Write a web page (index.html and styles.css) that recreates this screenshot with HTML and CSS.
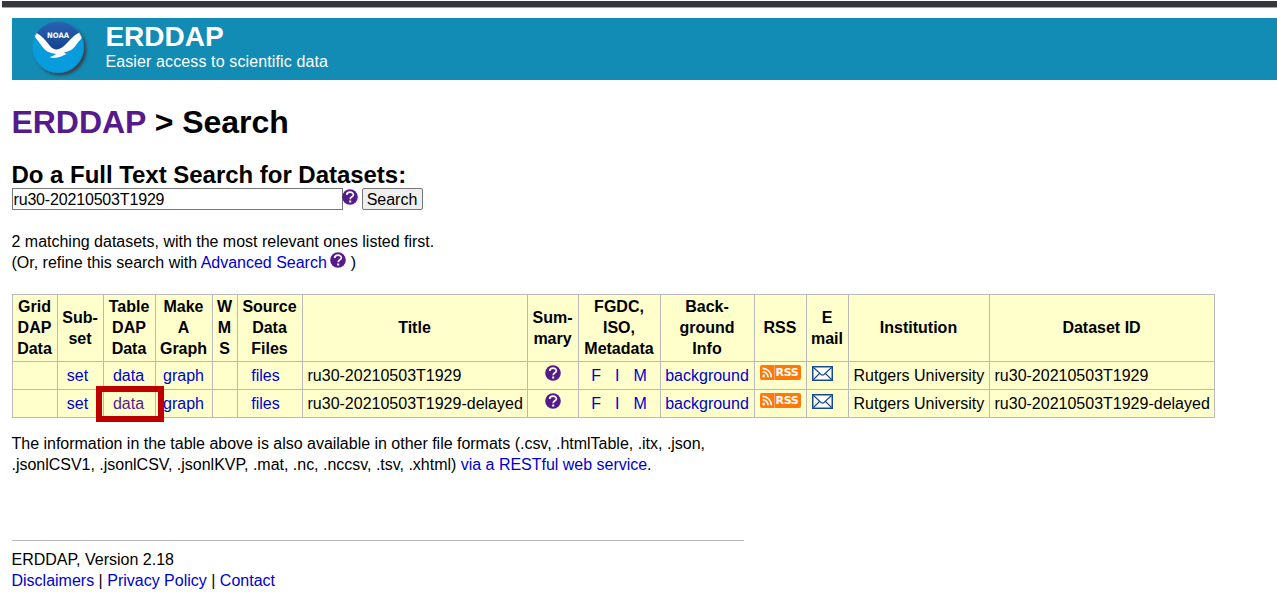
FILE: index.html
```
<!DOCTYPE html>
<html lang="en">
<head>
<meta charset="utf-8">
<title>ERDDAP - Search</title>
<link rel="stylesheet" href="styles.css">
</head>
<body>
<svg class="sprite" width="0" height="0" aria-hidden="true">
  <defs>
    <symbol id="help" viewBox="0 0 16 16">
      <circle cx="8" cy="8" r="7.8" fill="#551a8b"/>
      <path d="M4.7 6C4.7 2.3 11.4 2.3 11.4 5.8C11.4 8 8.2 7.7 8.2 10.2" fill="none" stroke="#fff" stroke-width="1.7"/>
      <rect x="7.2" y="11.5" width="2" height="2" fill="#fff"/>
    </symbol>
    <symbol id="feed" viewBox="0 0 14 15">
      <circle cx="3.7" cy="11" r="1.4" fill="#fff"/>
      <path d="M2.5 6.7A5.4 5.4 0 0 1 8 12.3M2.5 3.4A8.8 8.8 0 0 1 11.3 12.3" fill="none" stroke="#fff" stroke-width="1.6"/>
    </symbol>
    <symbol id="mail" viewBox="0 0 21 15">
      <rect x=".75" y=".75" width="19.5" height="13.5" fill="#fff" stroke="#174a8c" stroke-width="1.5"/>
      <path d="M1.5 1.5L9 8.5Q10.5 9.7 12 8.5L19.5 1.5M1.5 13.5L7.5 7.5M19.5 13.5L13.5 7.5" fill="none" stroke="#174a8c" stroke-width="1.1"/>
    </symbol>
  </defs>
</svg>
<div class="topbar"></div>
<header class="banner">
  <svg class="logo" viewBox="0 0 64 60">
    <defs>
      <linearGradient id="navy" x1="0" y1="0" x2="0" y2="1"><stop offset="0" stop-color="#2c67b5"/><stop offset="1" stop-color="#103f8f"/></linearGradient>
      <clipPath id="disc"><circle cx="28" cy="29" r="26"/></clipPath>
      <filter id="soft" x="-20%" y="-20%" width="140%" height="140%"><feGaussianBlur stdDeviation="1.5"/></filter>
    </defs>
    <circle cx="30.5" cy="31.5" r="26" fill="#34434d" filter="url(#soft)"/>
    <circle cx="28" cy="29" r="26" fill="#079cdd"/>
    <g clip-path="url(#disc)">
      <path d="M0 0H60V15C48 18 42 26 36 35L28 35L20 33C15 24 10 18 0 15Z" fill="url(#navy)"/>
      <path d="M1 12C9 15 14 20 20 28C24 33 29 32 34 28C40 23 44 15 56 12C54 20 49 22 46 27C42 33 38 33 34 35L37 36C33 37 30 40 23 40C21 40 20 39 20 39C23 38 25 37 26 36C19 35 15 33 11 27C8 22 5 20 1 12Z" fill="#fff"/>
    </g>
    <circle cx="28" cy="29" r="25.7" fill="none" stroke="#1689ba" stroke-width=".8"/>
    <text x="28" y="19.5" text-anchor="middle" class="logo-text" textLength="22" lengthAdjust="spacingAndGlyphs">NOAA</text>
  </svg>
  <div class="brand">
    <div class="brand-name">ERDDAP</div>
    <div class="tagline">Easier access to scientific data</div>
  </div>
</header>
<main class="content">
  <h1 class="title"><a class="visited">ERDDAP</a> &gt; Search</h1>
  <h2 class="subtitle">Do a Full Text Search for Datasets:</h2>
  <div class="search">
    <input class="query" type="text" value="ru30-20210503T1929">
    <svg class="help"><use href="#help"/></svg>
    <button class="go">Search</button>
  </div>
  <p class="result">2 matching datasets, with the most relevant ones listed first.<br>(Or, refine this search with <a>Advanced Search</a> <svg class="help"><use href="#help"/></svg> )</p>
  <table class="datasets">
    <colgroup><col class="w45"><col class="w46"><col class="w52"><col class="w57"><col class="w25"><col class="w65"><col class="w225"><col class="w51"><col class="w82"><col class="w94"><col class="w52"><col class="w42"><col class="w141"><col class="w225"></colgroup>
    <tr class="head"><th>Grid<br>DAP<br>Data</th><th>Sub-<br>set</th><th>Table<br>DAP<br>Data</th><th>Make<br>A<br>Graph</th><th>W<br>M<br>S</th><th>Source<br>Data<br>Files</th><th>Title</th><th>Sum-<br>mary</th><th>FGDC,<br>ISO,<br>Metadata</th><th>Back-<br>ground<br>Info</th><th>RSS</th><th>E<br>mail</th><th>Institution</th><th>Dataset ID</th></tr>
    <tr class="row">
      <td></td><td class="mid set"><a>set</a></td><td class="mid data"><a>data</a></td><td class="mid"><a>graph</a></td><td></td><td class="mid files"><a>files</a></td>
      <td>ru30-20210503T1929</td><td class="mid"><svg class="help"><use href="#help"/></svg></td>
      <td class="mid"><span class="formats"><a>F</a><a>I</a><a>M</a></span></td><td class="mid"><a>background</a></td>
      <td class="mid"><span class="rss"><svg class="feed"><use href="#feed"/></svg><b class="rss-text">RSS</b></span></td>
      <td><svg class="mail"><use href="#mail"/></svg></td><td>Rutgers University</td><td>ru30-20210503T1929</td>
    </tr>
    <tr class="row">
      <td></td><td class="mid set"><a>set</a></td><td class="mid data marked"><a class="visited">data</a><span class="marker"></span></td><td class="mid"><a>graph</a></td><td></td><td class="mid files"><a>files</a></td>
      <td>ru30-20210503T1929-delayed</td><td class="mid"><svg class="help"><use href="#help"/></svg></td>
      <td class="mid"><span class="formats"><a>F</a><a>I</a><a>M</a></span></td><td class="mid"><a>background</a></td>
      <td class="mid"><span class="rss"><svg class="feed"><use href="#feed"/></svg><b class="rss-text">RSS</b></span></td>
      <td><svg class="mail"><use href="#mail"/></svg></td><td>Rutgers University</td><td>ru30-20210503T1929-delayed</td>
    </tr>
  </table>
  <p class="note">The information in the table above is also available in other file formats (.csv, .htmlTable, .itx, .json,<br>.jsonlCSV1, .jsonlCSV, .jsonlKVP, .mat, .nc, .nccsv, .tsv, .xhtml) <a>via a RESTful web service</a>.</p>
  <footer class="footer">ERDDAP, Version 2.18<br><a>Disclaimers</a> | <a>Privacy Policy</a> | <a>Contact</a></footer>
</main>
</body>
</html>
```
FILE: styles.css
```
body {
  margin: 0;
  height: 616px;
  overflow: hidden;
  background: #fff;
  color: #000;
  font: 16px/21px "Liberation Sans", Arial, sans-serif;
}
.sprite { position: absolute; }
a { color: #0000cc; }
a.visited { color: #551a8b; }
.topbar {
  height: 6px;
  margin: 1px 0 10px 2px;
  background: #37383b;
  border-bottom: 1px solid #a5a5a5;
}
.banner {
  display: flex;
  height: 62px;
  margin-left: 12px;
  background: #128cb5;
}
.logo { width: 64px; height: 60px; margin-left: 18px; flex: none; }
.logo-text { font: bold 7.5px "DejaVu Sans", sans-serif; fill: #fff; }
.brand { margin-left: 11.4px; padding-top: 3px; color: #fff; }
.brand-name { font-size: 28px; line-height: 31px; font-weight: bold; }
.tagline { line-height: 19px; letter-spacing: .12px; }
.content { padding: 0 11.5px; }
.title { margin: 23px 0 0; font-size: 32px; line-height: 38px; letter-spacing: -.04px; }
.subtitle { margin: 20px 0 0; font-size: 24px; line-height: 27px; letter-spacing: -.03px; }
.search { display: flex; align-items: flex-start; height: 22px; }
.query {
  box-sizing: border-box;
  width: 331px;
  height: 22px;
  padding: 1px 1px 0;
  border: 1px solid #767676;
  font: 16px "Liberation Sans", Arial, sans-serif;
  letter-spacing: -.17px;
}
.help { width: 16px; height: 16px; }
.search .help { margin: 1px 0 0 -.5px; }
.go {
  width: 61px;
  height: 22px;
  margin-left: 3.5px;
  padding: 1px 0 0;
  border: 1px solid #767676;
  border-radius: 2px;
  background: #efefef;
  font: 16px "Liberation Sans", Arial, sans-serif;
}
.result { height: 42px; margin: 21px 0; white-space: nowrap; letter-spacing: -.01px; }
.result .help { vertical-align: 0; margin-left: -1px; }
.datasets {
  width: 1203px;
  table-layout: fixed;
  border-collapse: collapse;
  background: #ffffcc;
}
.w25 { width: 25px; }
.w42 { width: 42px; }
.w45 { width: 45px; }
.w46 { width: 46px; }
.w51 { width: 51px; }
.w52 { width: 52px; }
.w57 { width: 57px; }
.w65 { width: 65px; }
.w82 { width: 82px; }
.w94 { width: 94px; }
.w141 { width: 141px; }
.w225 { width: 225px; }
th, td { border: 1px solid #b9b9b9; white-space: nowrap; }
th { padding: 1px 0 2px; }
td { padding: 0 0 0 5px; text-align: left; }
td.mid { padding: 0; text-align: center; }
td.set { padding-right: 5px; }
td.data { padding-right: 1px; }
td.files { padding-right: 8px; }
.head { height: 67px; }
.row { height: 28px; }
.row svg { display: inline-block; }
.row .help { vertical-align: 0; }
.formats { display: inline-flex; gap: 14px; }
.rss {
  display: inline-flex;
  align-items: center;
  width: 41px;
  height: 15px;
  border-radius: 2px;
  background: #ff7909;
  vertical-align: -3px;
  position: relative;
  top: -4px;
}
.feed { width: 14px; height: 15px; border-right: 1px solid #ffa764; }
.rss-text { margin-left: 1px; color: #fff; font: bold 11px/15px "DejaVu Sans", sans-serif; letter-spacing: -.3px; }
.mail { width: 21px; height: 15px; vertical-align: 0; }
.marked { position: relative; }
.marker {
  position: absolute;
  left: -8px;
  top: -4px;
  width: 56px;
  height: 24px;
  border: 6px solid #bf0000;
}
.note { height: 42px; margin: 15px 0 65px; white-space: nowrap; letter-spacing: -.015px; }
.footer { width: 732px; padding-top: 8px; border-top: 1px solid #b9b9b9; }
```
